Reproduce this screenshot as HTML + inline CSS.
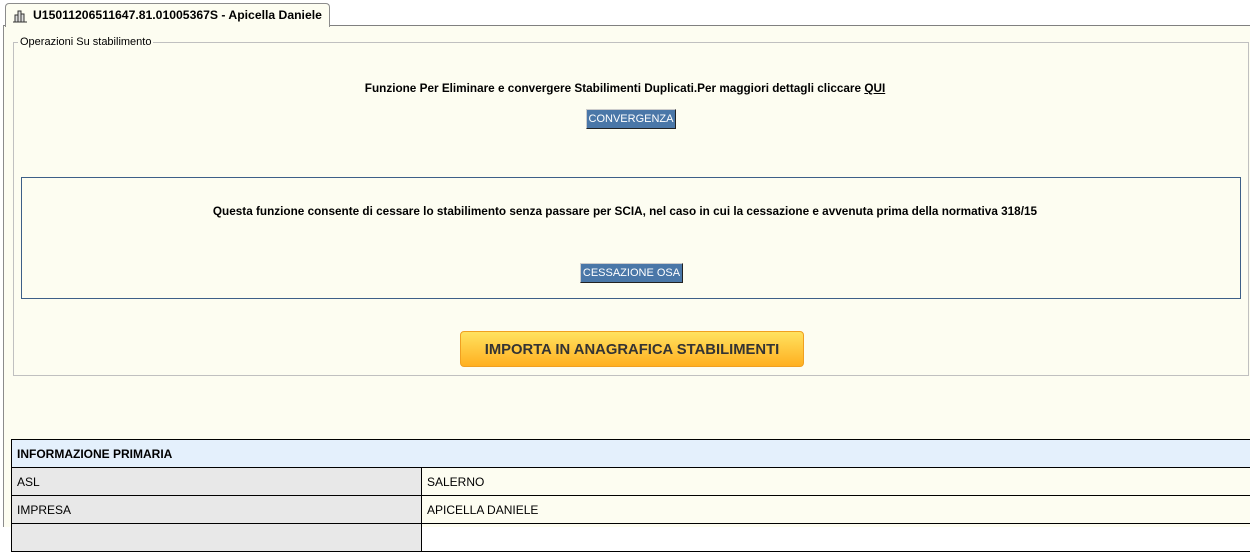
<!DOCTYPE html>
<html><head><meta charset="utf-8"><style>
body{margin:0;width:1250px;height:526px;overflow:hidden;background:#fff;font-family:"Liberation Sans",sans-serif;position:relative}
.a{position:absolute}
.main{left:3px;top:25px;width:1247px;height:501px;background:#fdfdf1;border-left:1px solid #8c8c8c;border-top:1px solid #808080}
.tab{left:5px;top:3px;width:323px;height:23px;background:#fdfdf1;border:1px solid #8c8c8c;border-bottom:none;border-radius:4px 4px 0 0;font-weight:bold;font-size:12.2px;line-height:22px;z-index:2}
.fs{left:13px;top:42px;width:1234px;height:332px;border:1px solid #c0c0c0}
.lg{left:18px;top:36px;background:#fdfdf1;font-size:11px;padding:0 2px}
.t{font-weight:bold;font-size:11.75px;text-align:center;width:1250px;left:0;white-space:nowrap}
.btn{background:#4a77a8;color:#fff;font-size:11px;text-align:center;border:1px solid #222;border-top-color:#ccc;border-left-color:#ccc;line-height:18px;white-space:nowrap}
.box{left:21px;top:177px;width:1218px;height:120px;border:1px solid #3d5f88}
.imp{left:460px;top:331px;width:342px;height:34px;border:1px solid #f0a020;border-radius:4px;background:linear-gradient(#ffe260,#ffb020);font-weight:bold;font-size:14.8px;color:#333;text-align:center;line-height:36px}
table{position:absolute;left:11px;top:439px;border-collapse:collapse;font-size:12px;width:1250px}
td{border:1px solid #000;height:27px;padding:0 0 0 5px}
</style></head><body>
<div class="a main"></div>
<div class="a tab"><svg width="16" height="14" style="position:absolute;left:6px;top:5px"><path d="M1 13h14M3 13V6h3v7M6 13V2h3v11M9 13V5h3v8" stroke="#333" fill="#ddd"/></svg><span style="position:absolute;left:27px">U15011206511647.81.01005367S - Apicella Daniele</span></div>
<div class="a fs"></div>
<div class="a lg">Operazioni Su stabilimento</div>
<div class="a t" style="top:82px">Funzione Per Eliminare e convergere Stabilimenti Duplicati.Per maggiori dettagli cliccare <u>QUI</u></div>
<div class="a btn" style="left:586px;top:109px;width:88px">CONVERGENZA</div>
<div class="a box"></div>
<div class="a t" style="top:205px">Questa funzione consente di cessare lo stabilimento senza passare per SCIA, nel caso in cui la cessazione e avvenuta prima della normativa 318/15</div>
<div class="a btn" style="left:580px;top:263px;width:101px">CESSAZIONE OSA</div>
<div class="a imp">IMPORTA IN ANAGRAFICA STABILIMENTI</div>
<table>
<tr><td colspan="2" style="background:#e4f0fc;font-weight:bold">INFORMAZIONE PRIMARIA</td></tr>
<tr><td style="background:#e8e8e8;width:404px">ASL</td><td>SALERNO</td></tr>
<tr><td style="background:#e8e8e8">IMPRESA</td><td>APICELLA DANIELE</td></tr>
<tr><td style="background:#e8e8e8"></td><td></td></tr>
</table>
</body></html>
